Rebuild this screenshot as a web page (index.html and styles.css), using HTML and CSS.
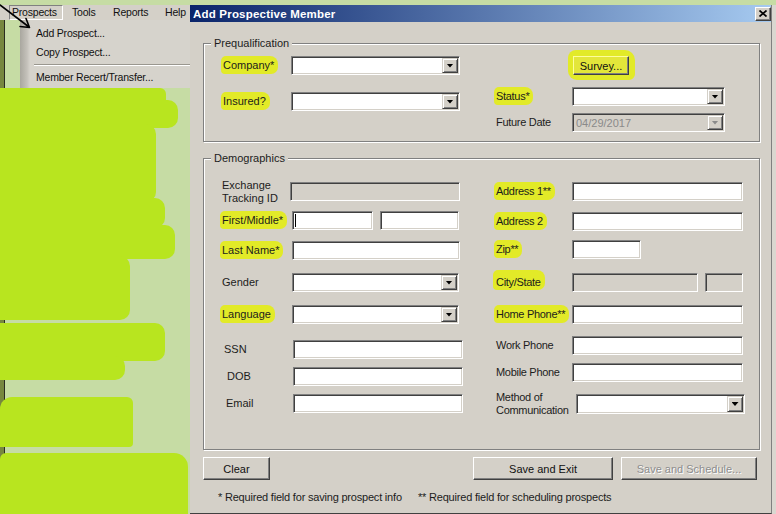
FILE: index.html
```html
<!DOCTYPE html>
<html lang="en">
<head>
<meta charset="utf-8">
<title>Add Prospective Member</title>
<link rel="stylesheet" href="styles.css">
</head>
<body>
<div class="topstrip"></div>
<div class="main">
  <aside class="side">
    <nav class="menubar">
      <span class="mi mi-prospects">Prospects</span>
      <span class="mi mi-tools">Tools</span>
      <span class="mi mi-reports">Reports</span>
      <span class="mi mi-help">Help</span>
    </nav>
    <div class="side-body">
      <div class="blob b-a1"></div>
      <div class="blob b-a2"></div>
      <div class="blob b-a3"></div>
      <div class="blob b-a4"></div>
      <div class="blob b-a5"></div>
      <div class="blob b-a6"></div>
      <div class="blob b-b1"></div>
      <div class="blob b-b2"></div>
      <div class="blob b-c"></div>
      <div class="blob b-d"></div>
      <div class="menu">
        <div class="menu-item">Add Prospect...</div>
        <div class="menu-item">Copy Prospect...</div>
        <div class="menu-sep"></div>
        <div class="menu-item">Member Recert/Transfer...</div>
      </div>
    </div>
  </aside>

  <section class="dialog">
    <div class="titlebar">
      <span class="title">Add Prospective Member</span>
      <span class="close"><svg width="8" height="7" viewBox="0 0 8 7"><path d="M0.5 0.5L7.5 6.5M7.5 0.5L0.5 6.5" stroke="#000" stroke-width="1.7" fill="none"/></svg></span>
    </div>
    <div class="dbody">
      <div class="group prequal">
        <span class="gtitle">Prequalification</span>
        <div class="pq-left">
          <div class="frow"><div class="lbl w68"><span class="hl">Company*</span></div><div class="ctl combo w169"><span class="cb"></span></div></div>
          <div class="frow"><div class="lbl w68"><span class="hl">Insured?</span></div><div class="ctl combo w169"><span class="cb"></span></div></div>
        </div>
        <div class="pq-right">
          <div class="frow"><div class="lbl w77"></div><span class="hl-btn"><span class="btn btn-survey">Survey...</span></span></div>
          <div class="frow r-status"><div class="lbl w76 rl"><span class="hl">Status*</span></div><div class="ctl combo w153"><span class="cb"></span></div></div>
          <div class="frow r-future"><div class="lbl w76 rl">Future Date</div><div class="ctl combo dis w153"><span class="ctext">04/29/2017</span><span class="cb cb-dis"></span></div></div>
        </div>
      </div>

      <div class="group demo">
        <span class="gtitle">Demographics</span>
        <div class="dcol dcol-left">
          <div class="frow"><div class="lbl w68 two">Exchange<br>Tracking ID</div><div class="ctl dis w170"></div></div>
          <div class="frow"><div class="lbl w70"><span class="hl">First/Middle*</span></div><div class="ctl w81"><span class="caret"></span></div><div class="ctl w79 ml7"></div></div>
          <div class="frow"><div class="lbl w70"><span class="hl">Last Name*</span></div><div class="ctl w168"></div></div>
          <div class="frow"><div class="lbl w70">Gender</div><div class="ctl combo w167"><span class="cb"></span></div></div>
          <div class="frow"><div class="lbl w70"><span class="hl">Language</span></div><div class="ctl combo w167"><span class="cb"></span></div></div>
          <div class="frow"><div class="lbl w71 in2">SSN</div><div class="ctl w170"></div></div>
          <div class="frow"><div class="lbl w71 in5">DOB</div><div class="ctl w170"></div></div>
          <div class="frow"><div class="lbl w71 in4">Email</div><div class="ctl w170"></div></div>
        </div>
        <div class="dcol dcol-right">
          <div class="frow"><div class="lbl w76 rl"><span class="hl">Address 1**</span></div><div class="ctl w171"></div></div>
          <div class="frow"><div class="lbl w76 rl"><span class="hl">Address 2</span></div><div class="ctl w171"></div></div>
          <div class="frow"><div class="lbl w76 rl"><span class="hl">Zip**</span></div><div class="ctl w69"></div></div>
          <div class="frow"><div class="lbl w76 rl"><span class="hl hl-up">City/State</span></div><div class="ctl dis w126"></div><div class="ctl dis w38 ml7"></div></div>
          <div class="frow"><div class="lbl w76 rl"><span class="hl">Home Phone**</span></div><div class="ctl w171"></div></div>
          <div class="frow"><div class="lbl w76 rl">Work Phone</div><div class="ctl w171"></div></div>
          <div class="frow"><div class="lbl w76 rl">Mobile Phone</div><div class="ctl w171"></div></div>
          <div class="frow r-method"><div class="lbl w80 rl two">Method of<br>Communication</div><div class="ctl combo w169"><span class="cb"></span></div></div>
        </div>
      </div>

      <div class="btnrow">
        <span class="btn btn-clear">Clear</span>
        <span class="btn btn-save">Save and Exit</span>
        <span class="btn btn-sched disabled">Save and Schedule...</span>
      </div>
      <div class="notes">
        <span class="note1">* Required field for saving prospect info</span>
        <span class="note2">** Required field for scheduling prospects</span>
      </div>
    </div>
  </section>
  <div class="filler"></div>
</div>
<svg class="arrow" width="40" height="34" viewBox="0 0 40 34"><path d="M0 5L29 27M20 26.5L29.5 27.5L26 18.5" stroke="#000" stroke-width="1.6" fill="none" stroke-linecap="round" stroke-linejoin="round"/></svg>
</body>
</html>
```

FILE: styles.css
```css
* { box-sizing: border-box; }
html, body { margin: 0; padding: 0; }
body {
  width: 776px;
  height: 514px;
  overflow: hidden;
  position: relative;
  background: #c6dca4;
  font-family: "Liberation Sans", Arial, sans-serif;
  font-size: 11px;
  color: #1c1c1c;
}
.topstrip { height: 5px; background: #c6dca4; }
.main { display: flex; height: 509px; }

/* ---------- left side (menu + highlighter) ---------- */
.side { width: 190px; display: flex; flex-direction: column; }
.menubar {
  height: 15px;
  background: #d4d0c8;
  display: flex;
  padding-left: 9px;
  line-height: 15px;
  color: #111;
  font-size: 10.5px;
  letter-spacing: -0.2px;
}
.mi { padding-left: 9px; white-space: nowrap; }
.mi-prospects {
  width: 54px;
  padding-left: 2px;
  line-height: 13px;
  border: 1px solid;
  border-color: #808080 #fff #fff #808080;
}
.mi-tools { width: 41px; }
.mi-reports { width: 52px; }
.side-body {
  flex: 1;
  position: relative;
  background: linear-gradient(to right, #77873f 0, #77873f 4px, #2a2c20 4px, #2a2c20 5px, #c6dca4 5px);
}
.menu {
  position: absolute;
  left: 20px;
  top: 0;
  width: 170px;
  height: 68px;
  padding-top: 4px;
  background: linear-gradient(to right, #a9a79f 0, #c4c1ba 7px, #d6d3cc 10px);
  color: #111;
  font-size: 10.5px;
  letter-spacing: -0.2px;
}
.menu-item { height: 19px; line-height: 19px; padding-left: 16px; white-space: nowrap; }
.menu-sep { margin: 2px 0 2px 14px; border-top: 1px solid #9a978f; border-bottom: 1px solid #fff; }

.blob { position: absolute; left: 0; background: #b8e51f; border-radius: 0 10px 10px 0; }
.b-a1 { top: 68px; width: 166px; height: 18px; border-radius: 0 6px 0 0; }
.b-a2 { top: 80px; width: 178px; height: 28px; }
.b-a3 { top: 104px; width: 156px; height: 78px; }
.b-a4 { top: 178px; width: 165px; height: 30px; }
.b-a5 { top: 205px; width: 175px; height: 34px; }
.b-a6 { top: 236px; width: 130px; height: 64px; }
.b-b1 { top: 303px; width: 165px; height: 38px; }
.b-b2 { top: 336px; width: 125px; height: 24px; }
.b-c  { top: 377px; width: 133px; height: 50px; border-radius: 12px 6px 4px 0; }
.b-d  { top: 433px; width: 188px; height: 61px; border-radius: 6px 14px 0 0; }

.arrow { position: absolute; left: 0; top: 0; }

/* ---------- dialog ---------- */
.dialog {
  width: 582px;
  background: #d4d0c8;
  border-right: 1px solid #808080;
  border-bottom: 1px solid #404040;
  display: flex;
  flex-direction: column;
}
.filler { flex: 1; background: #dad7d0; }
.titlebar {
  height: 17px;
  flex: none;
  background: linear-gradient(to right, #0a246a, #a6caf0);
  display: flex;
  align-items: center;
  justify-content: space-between;
  padding: 0 0 0 3px;
}
.title { color: #fff; font-weight: bold; font-size: 11.5px; letter-spacing: 0.2px; }
.close {
  width: 16px;
  height: 14px;
  background: #d4d0c8;
  border: 1px solid;
  border-color: #fff #404040 #404040 #fff;
  box-shadow: inset -1px -1px #808080;
  display: flex;
  align-items: center;
  justify-content: center;
}
.dbody { padding: 21px 0 0 13px; display: flex; flex-direction: column; }

.group {
  position: relative;
  width: 557px;
  border: 1px solid #808080;
  box-shadow: inset 1px 1px #fff, 1px 1px #fff;
  display: flex;
}
.gtitle {
  position: absolute;
  top: -7px;
  left: 7px;
  padding: 0 3px;
  line-height: 13px;
  background: #d4d0c8;
}
.prequal { height: 99px; padding: 12px 0 0 19px; }
.pq-left { width: 236px; display: flex; flex-direction: column; gap: 17px; }
.pq-right { margin-left: 37px; display: flex; flex-direction: column; }
.r-status { margin-top: 12px; }
.r-future { margin-top: 7px; }

.demo { height: 292px; margin-top: 16px; padding: 23px 0 0 18px; }
.dcol { display: grid; align-content: start; }
.dcol-left { width: 274px; grid-template-rows: 29px 30px 32px 32px 35px 27px 27px 19px; }
.dcol-right { grid-template-rows: 30px 28px 33px 32px 31px 27px 31px 20px; }

.frow { display: flex; align-items: center; height: 19px; }
.r-method { height: 20px; }
.lbl { flex: none; white-space: nowrap; line-height: 13px; }
.rl { letter-spacing: -0.3px; }
.in2 { padding-left: 2px; }
.in5 { padding-left: 5px; }
.in4 { padding-left: 4px; }
.w68 { width: 68px; }
.w70 { width: 70px; }
.w71 { width: 71px; }
.w76 { width: 76px; }
.w77 { width: 77px; }
.w80 { width: 80px; }

.hl {
  background: #e2ea28;
  border-radius: 5px 8px 7px 4px;
  padding: 3px 4px 3px 2px;
  margin: -3px -4px -3px -2px;
}
.hl-up { padding: 6px 4px 2px 3px; margin: -6px -4px -2px -3px; }

/* text boxes & combos */
.ctl {
  flex: none;
  height: 19px;
  background: #fff;
  border-style: solid;
  border-width: 1px;
  border-color: #808080 #fff #fff #808080;
  box-shadow: inset 1px 1px #404040, inset -1px -1px #d4d0c8;
  display: flex;
  align-items: center;
}
.r-method .ctl { height: 20px; }
.ctl.dis { background: #d4d0c8; }
.ml7 { margin-left: 7px; }
.w38 { width: 38px; }
.w69 { width: 69px; }
.w79 { width: 79px; }
.w81 { width: 81px; }
.w126 { width: 126px; }
.w153 { width: 153px; }
.w167 { width: 167px; }
.w168 { width: 168px; }
.w169 { width: 169px; }
.w170 { width: 170px; }
.w171 { width: 171px; }

.combo { justify-content: flex-end; padding: 1px; }
.combo.dis { justify-content: space-between; }
.ctext { padding-left: 2px; color: #8a8a8a; }
.cb {
  width: 16px;
  height: 100%;
  background: #d4d0c8;
  border: 1px solid;
  border-color: #d4d0c8 #404040 #404040 #d4d0c8;
  box-shadow: inset 1px 1px #fff, inset -1px -1px #808080;
  display: flex;
  align-items: center;
  justify-content: center;
}
.cb::after {
  content: "";
  width: 7px;
  height: 4px;
  background: #000;
  clip-path: polygon(0 0, 100% 0, 50% 100%);
}
.cb-dis::after { background: #8a8a8a; }
.caret { width: 1px; height: 13px; background: #000; margin-left: 2px; }

/* buttons */
.btn {
  flex: none;
  height: 23px;
  background: #d4d0c8;
  border: 1px solid;
  border-color: #fff #404040 #404040 #fff;
  box-shadow: inset -1px -1px #808080;
  display: flex;
  align-items: center;
  justify-content: center;
  color: #111;
  white-space: nowrap;
}
.hl-btn {
  background: #e2ea28;
  border-radius: 8px 10px 6px 9px;
  padding: 6px 6px 5px 5px;
  margin: -6px -6px -5px -5px;
}
.btn-survey {
  width: 56px;
  height: 19px;
  background: #e3e63a;
  border-color: #fdfd9c #404040 #404040 #fdfd9c;
}
.btnrow { width: 557px; display: flex; margin-top: 7px; padding-right: 3px; }
.btn-clear { width: 67px; }
.btn-save { width: 140px; margin-left: auto; }
.btn-sched { width: 136px; margin-left: 8px; }
.btn.disabled { color: #8d8d8d; text-shadow: 1px 1px #fff; }

.notes { display: flex; margin-top: 11px; padding-left: 15px; line-height: 13px; letter-spacing: -0.2px; }
.note1 { width: 200px; white-space: nowrap; }
.note2 { white-space: nowrap; }
```
